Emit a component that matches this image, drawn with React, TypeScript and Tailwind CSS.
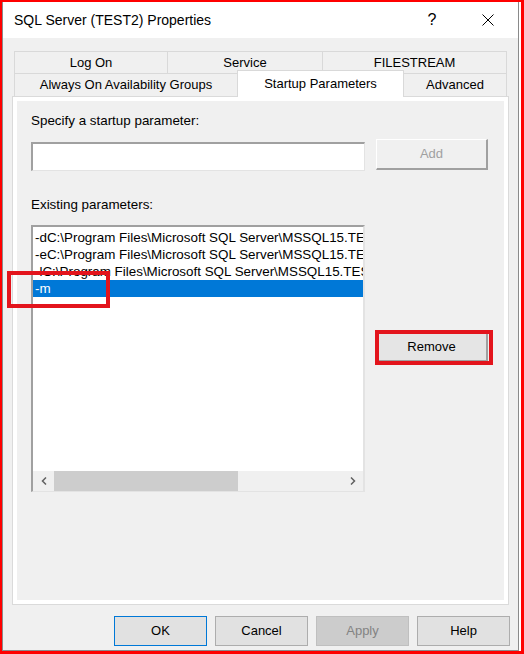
import React from 'react'

const rowOne = [
  { label: 'Log On', w: 'w-[153px]' },
  { label: 'Service', w: 'w-[155px]' },
  { label: 'FILESTREAM', w: 'w-[185px]' },
]

const params = [
  '-dC:\\Program Files\\Microsoft SQL Server\\MSSQL15.TEST2\\MSSQL\\DATA\\master.mdf',
  '-eC:\\Program Files\\Microsoft SQL Server\\MSSQL15.TEST2\\MSSQL\\Log\\ERRORLOG',
  '-lC:\\Program Files\\Microsoft SQL Server\\MSSQL15.TEST2\\MSSQL\\DATA\\mastlog.ldf',
  '-m',
]

const App: React.FC = () => {
  const selected = 3

  return (
    <div className="relative w-[524px] h-[654px] bg-white border-t-2 border-l-2 border-r-[3px] border-b-[3px] border-[#ff0000] font-['Liberation_Sans',Arial,sans-serif] text-[13px] text-black">
      <div className="flex flex-col w-[517px] h-full border-l border-r border-b border-[#8a8a8a]">
        {/* title bar */}
        <div className="flex items-center h-[36px] bg-white shrink-0">
          <span className="pl-[11px] text-[14px]">SQL Server (TEST2) Properties</span>
          <span className="ml-auto w-[46px] text-center text-[16px] leading-none">?</span>
          <span className="w-[46px] ml-[10px] mr-[7px] flex justify-center">
            <svg width="12" height="12" viewBox="0 0 12 12">
              <path d="M0.5 0.5 L11.5 11.5 M11.5 0.5 L0.5 11.5" stroke="#000" strokeWidth="1" />
            </svg>
          </span>
        </div>

        {/* body */}
        <div className="flex-1 flex flex-col bg-[#f0f0f0] px-[9px] pt-[13px] pb-[3px]">
          {/* tabs */}
          <div className="ml-[2px] w-[493px]">
            <div className="flex h-[22px]">
              {rowOne.map((t, i) => (
                <div
                  key={t.label}
                  className={`${t.w} flex items-center justify-center border-t border-l border-[#d9d9d9] ${i === rowOne.length - 1 ? 'border-r' : ''}`}
                >
                  {t.label}
                </div>
              ))}
            </div>
            <div className="flex items-end h-[23px]">
              <div className="w-[223px] h-[23px] flex items-center justify-center border-t border-l border-[#d9d9d9]">
                Always On Availability Groups
              </div>
              <div className="relative z-10 w-[167px] h-[27px] -mb-px flex items-center justify-center bg-white border-t border-l border-r border-[#d9d9d9]">
                Startup Parameters
              </div>
              <div className="w-[103px] h-[23px] flex items-center justify-center border-t border-r border-[#d9d9d9]">
                Advanced
              </div>
            </div>
          </div>

          {/* tab page */}
          <div className="h-[509px] border border-[#dadada] bg-white p-[4px]">
            <div className="h-full bg-[#f0f0f0] pl-[14px] pt-[12px] text-[13.4px]">
              <div className="leading-[16px]">Specify a startup parameter:</div>

              <div className="flex items-start mt-[10px]">
                <div className="mt-[3px] w-[334px] h-[29px] bg-white border-t-2 border-l-2 border-t-[#a0a0a0] border-l-[#a0a0a0] border-b border-r border-b-[#e3e3e3] border-r-[#e3e3e3]" />
                <button className="ml-[11px] w-[112px] h-[31px] bg-[#f0f0f0] text-[13px] text-[#a0a0a0] border-t border-l border-t-white border-l-white border-b-2 border-r-2 border-b-[#a0a0a0] border-r-[#a0a0a0]">
                  Add
                </button>
              </div>

              <div className="mt-[26px] leading-[16px]">Existing parameters:</div>

              <div className="flex items-start mt-[12px]">
                <div className="w-[334px] h-[267px] flex flex-col bg-white border-t-2 border-l-2 border-t-[#a0a0a0] border-l-[#a0a0a0] border-r-2 border-b border-r-[#e3e3e3] border-b-[#e3e3e3]">
                  <div className="flex-1 overflow-hidden pt-[2px]">
                    {params.map((p, i) => (
                      <div
                        key={p}
                        className={`h-[17px] leading-[17px] pl-[2px] whitespace-nowrap ${i === selected ? 'bg-[#0078d7] text-white' : ''}`}
                      >
                        {p}
                      </div>
                    ))}
                  </div>
                  {/* horizontal scrollbar */}
                  <div className="flex h-[20px] bg-[#f0f0f0]">
                    <div className="w-[21px] flex items-center justify-center">
                      <svg width="6" height="8" viewBox="0 0 6 8">
                        <path d="M5 0.5 L1.5 4 L5 7.5" stroke="#606060" strokeWidth="1.5" fill="none" />
                      </svg>
                    </div>
                    <div className="w-[184px] bg-[#cdcdcd]" />
                    <div className="flex-1" />
                    <div className="w-[21px] flex items-center justify-center">
                      <svg width="6" height="8" viewBox="0 0 6 8">
                        <path d="M1 0.5 L4.5 4 L1 7.5" stroke="#606060" strokeWidth="1.5" fill="none" />
                      </svg>
                    </div>
                  </div>
                </div>

                <button className="ml-[11px] mt-[107px] w-[112px] h-[30px] bg-[#e5e5e5] text-[13px] border-t border-l border-t-white border-l-white border-b-2 border-r-2 border-b-[#a0a0a0] border-r-[#a0a0a0]">
                  Remove
                </button>
              </div>
            </div>
          </div>

          {/* dialog buttons */}
          <div className="flex justify-end gap-[8px] mt-[11px] -mr-px">
            <button className="w-[93px] h-[30px] bg-[#e1e1e1] border border-[#0078d7]">OK</button>
            <button className="w-[93px] h-[30px] bg-[#e1e1e1] border border-[#adadad]">Cancel</button>
            <button className="w-[93px] h-[30px] bg-[#cccccc] border border-[#bfbfbf] text-[#838383]">Apply</button>
            <button className="w-[93px] h-[30px] bg-[#e1e1e1] border border-[#adadad]">Help</button>
          </div>
        </div>
      </div>

      {/* red annotation boxes */}
      <div className="absolute left-[5px] top-[269px] w-[103px] h-[37px] border-4 border-[#e3141c]" />
      <div className="absolute left-[373px] top-[328px] w-[118px] h-[35px] border-4 border-[#e3141c]" />
    </div>
  )
}

export default App
